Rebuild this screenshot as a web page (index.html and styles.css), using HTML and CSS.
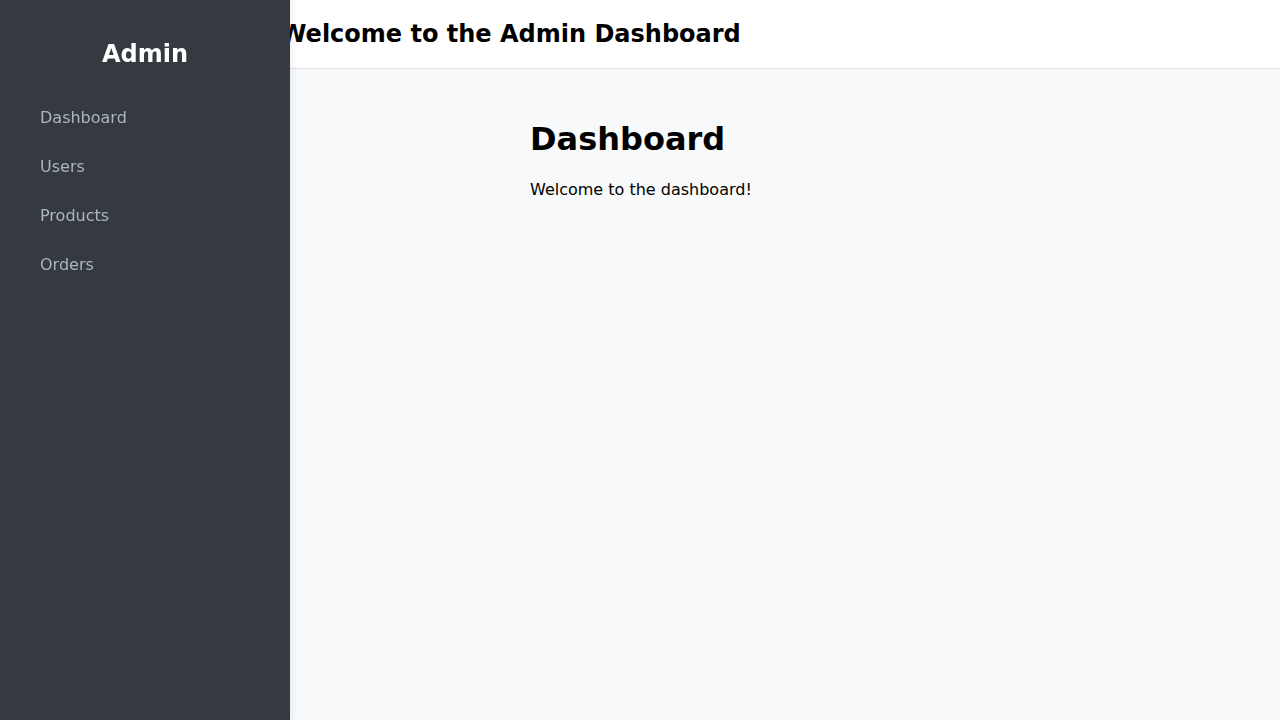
FILE: index.html
```html
<!DOCTYPE html>
<html lang="en">
<head>
<meta charset="utf-8">
<title>Admin Dashboard</title>
<link rel="stylesheet" href="styles.css">
</head>
<body>
<aside class="sidebar">
  <h2 class="brand">Admin</h2>
  <ul class="nav">
    <li><a href="#">Dashboard</a></li>
    <li><a href="#">Users</a></li>
    <li><a href="#">Products</a></li>
    <li><a href="#">Orders</a></li>
  </ul>
</aside>
<div class="wrapper">
  <header class="topbar">
    <h1 class="topbar-title">Welcome to the Admin Dashboard</h1>
  </header>
  <main class="content">
    <h1 class="page-title">Dashboard</h1>
    <p class="page-text">Welcome to the dashboard!</p>
  </main>
</div>
</body>
</html>
```

FILE: styles.css
```css
* { box-sizing: border-box; }
html, body { height: 100%; }
body {
  margin: 0;
  font-family: "DejaVu Sans", sans-serif;
  background: #f8f9fa;
  color: #000;
}
.sidebar {
  position: fixed;
  top: 0;
  left: 0;
  bottom: 0;
  width: 290px;
  padding: 20px;
  background: #343a40;
  box-shadow: 2px 0 8px rgba(0, 0, 0, 0.08);
  z-index: 10;
}
.brand {
  margin: 20px 0 25px;
  font-size: 24px;
  font-weight: bold;
  color: #fff;
  text-align: center;
}
.nav {
  list-style: none;
  margin: 0;
  padding: 0;
}
.nav li {
  padding: 15px 20px;
}
.nav a {
  color: #adb5bd;
  text-decoration: none;
  font-size: 16px;
}
.wrapper {
  margin-left: 250px;
  min-height: 100%;
  display: flex;
  flex-direction: column;
}
.topbar {
  background: #fff;
  border-bottom: 1px solid #dee2e6;
  padding: 20px 20px 20px 30px;
  height: 69px;
}
.topbar-title {
  margin: 0;
  font-size: 24px;
  font-weight: bold;
}
.content {
  flex: 1;
  padding: 30px 30px 30px 280px;
}
.page-title {
  margin: 0.67em 0;
  font-size: 32px;
  font-weight: bold;
}
.page-text {
  margin: 22px 0 16px;
  font-size: 16px;
}
```
